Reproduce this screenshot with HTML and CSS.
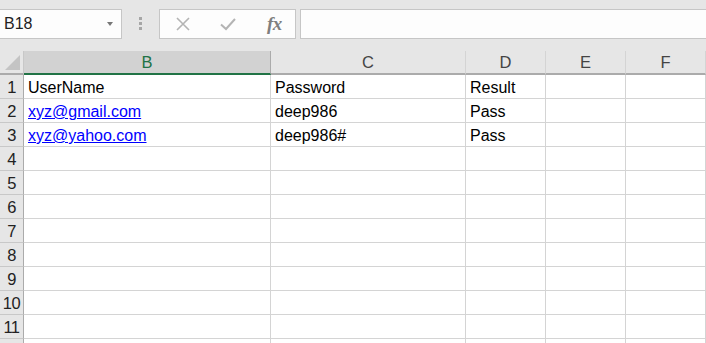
FILE: index.html
```html
<!DOCTYPE html>
<html>
<head>
<meta charset="utf-8">
<link rel="stylesheet" href="styles.css">
</head>
<body>
<div class="toolbar">
  <div class="namebox"><span class="nb-text">B18</span><span class="nb-arrow"></span></div>
  <div class="grip"><i></i><i></i><i></i></div>
  <div class="fbtns">
    <svg class="ico" width="16" height="16" viewBox="0 0 16 16"><path d="M2 2 L14 14 M14 2 L2 14" stroke="#b4b4b4" stroke-width="1.6" fill="none"/></svg>
    <svg class="ico" width="18" height="16" viewBox="0 0 18 16"><path d="M2 8.5 L7 13 L16 3" stroke="#b4b4b4" stroke-width="2" fill="none"/></svg>
    <span class="fx">fx</span>
  </div>
  <div class="finput"></div>
</div>
<div class="sheet">
  <div class="corner"><span class="tri"></span></div>
  <div class="ch sel">B</div>
  <div class="ch">C</div>
  <div class="ch">D</div>
  <div class="ch">E</div>
  <div class="ch">F</div>
  <div class="ch last"></div>

  <div class="rh">1</div><div class="c">UserName</div><div class="c">Password</div><div class="c">Result</div><div class="c"></div><div class="c"></div><div class="c last"></div>
  <div class="rh">2</div><div class="c"><a class="lnk">xyz@gmail.com</a></div><div class="c">deep986</div><div class="c">Pass</div><div class="c"></div><div class="c"></div><div class="c last"></div>
  <div class="rh">3</div><div class="c"><a class="lnk">xyz@yahoo.com</a></div><div class="c">deep986#</div><div class="c">Pass</div><div class="c"></div><div class="c"></div><div class="c last"></div>
  <div class="rh">4</div><div class="c"></div><div class="c"></div><div class="c"></div><div class="c"></div><div class="c"></div><div class="c last"></div>
  <div class="rh">5</div><div class="c"></div><div class="c"></div><div class="c"></div><div class="c"></div><div class="c"></div><div class="c last"></div>
  <div class="rh">6</div><div class="c"></div><div class="c"></div><div class="c"></div><div class="c"></div><div class="c"></div><div class="c last"></div>
  <div class="rh">7</div><div class="c"></div><div class="c"></div><div class="c"></div><div class="c"></div><div class="c"></div><div class="c last"></div>
  <div class="rh">8</div><div class="c"></div><div class="c"></div><div class="c"></div><div class="c"></div><div class="c"></div><div class="c last"></div>
  <div class="rh">9</div><div class="c"></div><div class="c"></div><div class="c"></div><div class="c"></div><div class="c"></div><div class="c last"></div>
  <div class="rh">10</div><div class="c"></div><div class="c"></div><div class="c"></div><div class="c"></div><div class="c"></div><div class="c last"></div>
  <div class="rh">11</div><div class="c"></div><div class="c"></div><div class="c"></div><div class="c"></div><div class="c"></div><div class="c last"></div>
  <div class="rh"></div><div class="c"></div><div class="c"></div><div class="c"></div><div class="c"></div><div class="c"></div><div class="c last"></div>
</div>
</body>
</html>
```

FILE: styles.css
```css
* { box-sizing: border-box; }
html, body { margin: 0; padding: 0; }
body {
  background: #ffffff;
  font-family: "Liberation Sans", Arial, sans-serif;
  width: 706px;
  height: 343px;
  overflow: hidden;
}
.toolbar {
  height: 51px;
  background: #e6e6e6;
  display: flex;
  align-items: flex-start;
  padding-top: 9px;
}
.namebox {
  width: 123px;
  height: 30px;
  margin-left: -1px;
  background: #fdfdfd;
  border: 1px solid #c6c6c6;
  display: flex;
  align-items: center;
  justify-content: space-between;
  padding: 0 8px 0 4px;
}
.nb-text {
  font-size: 16px;
  color: #222;
}
.nb-arrow {
  width: 0; height: 0;
  border-left: 3.5px solid transparent;
  border-right: 3.5px solid transparent;
  border-top: 4px solid #777;
}
.grip {
  width: 37px;
  display: flex;
  flex-direction: column;
  align-items: center;
  gap: 2px;
  padding-top: 8px;
}
.grip i {
  display: block;
  width: 3px;
  height: 3px;
  background: #a6a6a6;
}
.fbtns {
  width: 137px;
  height: 30px;
  background: #fdfdfd;
  border: 1px solid #c6c6c6;
  display: flex;
  align-items: center;
  padding-left: 15px;
  gap: 28px;
}
.fbtns .ico { display: block; }
.fx {
  font-family: "Liberation Serif", "Times New Roman", serif;
  font-style: italic;
  font-weight: bold;
  font-size: 19px;
  color: #7f7f7f;
  margin-left: 2px;
  letter-spacing: -0.5px;
}
.finput {
  flex: 1;
  margin-left: 4px;
  height: 30px;
  background: #fdfdfd;
  border: 1px solid #c6c6c6;
  border-right: none;
}
.sheet {
  display: grid;
  grid-template-columns: 24px 247px 195px 80px 80px 80px 1fr;
  grid-template-rows: 24px repeat(12, 24px);
  font-size: 16px;
}
.corner {
  background: #e6e6e6;
  border-right: 1px solid #c8c8c8;
  border-bottom: 2px solid #ababab;
  position: relative;
}
.tri {
  position: absolute;
  right: 3px;
  bottom: 3px;
  width: 0; height: 0;
  border-left: 15px solid transparent;
  border-bottom: 15px solid #c4c4c4;
}
.ch {
  background: #e6e6e6;
  border-right: 1px solid #d4d4d4;
  border-bottom: 2px solid #ababab;
  color: #444;
  text-align: center;
  line-height: 23px;
  font-size: 16.5px;
}
.ch.sel {
  background: #d2d2d2;
  color: #217346;
  border-bottom-color: #217346;
  border-right-color: #ababab;
}
.rh {
  background: #e6e6e6;
  border-right: 1px solid #ababab;
  border-bottom: 1px solid #c8c8c8;
  color: #222;
  text-align: center;
  line-height: 24px;
  letter-spacing: -0.5px;
  font-size: 16.5px;
}
.c {
  border-right: 1px solid #d4d4d4;
  border-bottom: 1px solid #d4d4d4;
  padding: 1px 0 0 4px;
  line-height: 23px;
  color: #000;
  white-space: nowrap;
  overflow: hidden;
}
.last { border-right: none; }
.lnk {
  color: #0000ff;
  text-decoration: underline;
}
```
